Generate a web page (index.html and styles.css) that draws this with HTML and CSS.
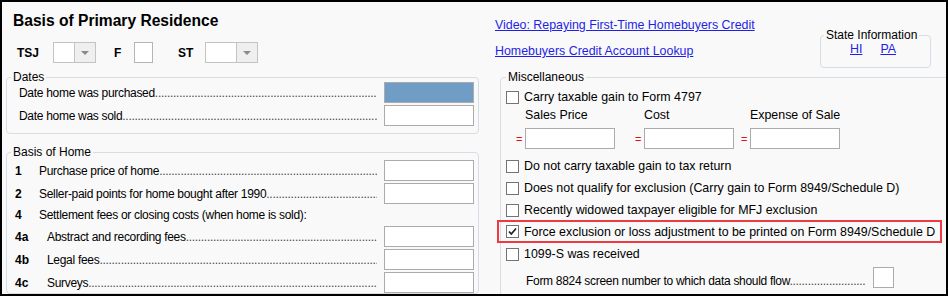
FILE: index.html
```html
<!DOCTYPE html>
<html lang="en">
    <head>
        <meta charset="UTF-8" />
        <meta name="viewport" content="width=device-width, initial-scale=1.0" />
        <title>Basis of Primary Residence</title>
        <link rel="stylesheet" href="styles.css">
    </head>
    <body>
        <div class="frame">
            <div class="left">
                <h1 class="title">Basis of Primary Residence</h1>
                <div class="filing">
                    <span class="tag tag-tsj">TSJ</span>
                    <span class="combo combo-tsj"><span class="combo-val"></span><span class="combo-btn"></span></span>
                    <span class="tag tag-f">F</span>
                    <span class="box box-f"></span>
                    <span class="tag tag-st">ST</span>
                    <span class="combo combo-st"><span class="combo-val"></span><span class="combo-btn"></span></span>
                </div>

                <fieldset class="group group-dates">
                    <legend>Dates</legend>
                    <div class="row">
                        <span class="lead">Date home was purchased</span>
                        <span class="field field-active"></span>
                    </div>
                    <div class="row">
                        <span class="lead">Date home was sold</span>
                        <span class="field"></span>
                    </div>
                </fieldset>

                <fieldset class="group group-basis">
                    <legend>Basis of Home</legend>
                    <div class="row">
                        <span class="num">1</span>
                        <span class="lead">Purchase price of home</span>
                        <span class="field"></span>
                    </div>
                    <div class="row">
                        <span class="num">2</span>
                        <span class="lead">Seller-paid points for home bought after 1990</span>
                        <span class="field"></span>
                    </div>
                    <div class="row row-head">
                        <span class="num">4</span>
                        <span class="plain">Settlement fees or closing costs (when home is sold):</span>
                    </div>
                    <div class="row">
                        <span class="num">4a</span>
                        <span class="lead sub">Abstract and recording fees</span>
                        <span class="field"></span>
                    </div>
                    <div class="row">
                        <span class="num">4b</span>
                        <span class="lead sub">Legal fees</span>
                        <span class="field"></span>
                    </div>
                    <div class="row">
                        <span class="num">4c</span>
                        <span class="lead sub">Surveys</span>
                        <span class="field"></span>
                    </div>
                </fieldset>
            </div>

            <div class="right">
                <div class="top">
                    <div class="links">
                        <a href="#">Video: Repaying First-Time Homebuyers Credit</a>
                        <a href="#">Homebuyers Credit Account Lookup</a>
                    </div>
                    <fieldset class="state">
                        <legend>State Information</legend>
                        <div class="state-links">
                            <a href="#">HI</a>
                            <a href="#">PA</a>
                        </div>
                    </fieldset>
                </div>

                <fieldset class="group misc">
                    <legend>Miscellaneous</legend>
                    <div class="check check-first"><span class="cb"></span>Carry taxable gain to Form 4797</div>
                    <div class="amounts amounts-head">
                        <span>Sales Price</span>
                        <span>Cost</span>
                        <span>Expense of Sale</span>
                    </div>
                    <div class="amounts amounts-fields">
                        <span class="amt"><span class="eq">=</span><span class="field"></span></span>
                        <span class="amt"><span class="eq">=</span><span class="field"></span></span>
                        <span class="amt"><span class="eq">=</span><span class="field"></span></span>
                    </div>
                    <div class="check check-gap"><span class="cb"></span>Do not carry taxable gain to tax return</div>
                    <div class="check"><span class="cb"></span>Does not qualify for exclusion (Carry gain to Form 8949/Schedule D)</div>
                    <div class="check"><span class="cb"></span>Recently widowed taxpayer eligible for MFJ exclusion</div>
                    <div class="check check-marked">
                        <span class="cb">
                            <svg width="11" height="11" viewBox="0 0 11 11"><path d="M2 5.5 L4.3 8 L9 2.5" fill="none" stroke="#1e1e1e" stroke-width="1.7"/></svg>
                        </span>Force exclusion or loss adjustment to be printed on Form 8949/Schedule D
                    </div>
                    <div class="check"><span class="cb"></span>1099-S was received</div>
                    <div class="flow">
                        <span class="lead">Form 8824 screen number to which data should flow</span>
                        <span class="field field-small"></span>
                    </div>
                </fieldset>
            </div>
        </div>
    </body>
</html>
```

FILE: styles.css
```css
* {
    box-sizing: border-box;
}
body {
    margin: 0;
    font-family: "Liberation Sans", Arial, sans-serif;
    font-size: 12px;
    color: #000;
}
.frame {
    width: 948px;
    height: 296px;
    border: 2px solid #000;
    background: #f9f9f9;
    display: flex;
    overflow: hidden;
}
.left {
    width: 486px;
    flex-shrink: 0;
}
.right {
    flex: 1;
    min-width: 0;
    font-size: 12.4px;
}

/* header */
.title {
    margin: 9px 0 0 11px;
    font-size: 15.6px;
    line-height: 20px;
    font-weight: bold;
}
.filing {
    display: flex;
    align-items: center;
    height: 21px;
    margin-top: 11px;
}
.tag {
    font-weight: bold;
}
.tag-tsj {
    margin-left: 15px;
    width: 36px;
}
.tag-f {
    margin-left: 18px;
    width: 20px;
}
.tag-st {
    margin-left: 25px;
    width: 27px;
}
.combo {
    display: flex;
    height: 21px;
    border: 1px solid #c3c3c3;
    background: #fff;
}
.combo-tsj {
    width: 43px;
}
.combo-st {
    width: 53px;
}
.combo-val {
    flex: 1;
}
.combo-btn {
    width: 21px;
    background: #efefef;
    border-left: 1px solid #c3c3c3;
    display: flex;
    align-items: center;
    justify-content: center;
}
.combo-btn::after {
    content: "";
    border-left: 4px solid transparent;
    border-right: 4px solid transparent;
    border-top: 4px solid #8a8a8a;
}
.box {
    height: 21px;
    border: 1px solid #b5b5b5;
    background: #fff;
}
.box-f {
    width: 19px;
}

/* groups */
.group {
    margin: 0;
    padding: 0 4px;
    border: 1px solid #d6dde5;
    border-radius: 4px;
    min-inline-size: 0;
}
.group legend,
.state legend {
    padding: 0 2px;
    line-height: 10px;
    font-size: 12px;
}
.group-dates {
    width: 473px;
    margin: 9px 0 0 4px;
    padding-bottom: 7px;
}
.group-basis {
    width: 473px;
    margin: 13px 0 0 4px;
    padding-top: 3px;
}
.row {
    display: flex;
    align-items: center;
    height: 21px;
    margin-bottom: 2px;
}
.row:last-child {
    margin-bottom: 0;
}
.row-head {
    height: 18px;
}
.group-dates .lead {
    padding-left: 8px;
}
.num {
    width: 24px;
    margin-left: 4px;
    font-weight: bold;
}
.plain {
    letter-spacing: -0.3px;
}
.lead {
    flex: 1;
    min-width: 0;
    overflow: hidden;
    white-space: nowrap;
    margin-right: 7px;
    font-size: 12px;
    letter-spacing: -0.3px;
}
.lead::after {
    content: "........................................................................................................................................................................................";
    color: #444;
}
.lead.sub {
    padding-left: 8px;
}
.field {
    width: 90px;
    height: 21px;
    border: 1px solid #ababab;
    background: #fff;
    flex-shrink: 0;
}
.field-active {
    background: #6f9dc5;
}

/* right side */
.top {
    display: flex;
    justify-content: space-between;
    height: 70px;
}
.links {
    display: flex;
    flex-direction: column;
    gap: 11px;
    margin: 16px 0 0 7px;
}
a {
    color: #1f1fe6;
    line-height: 15px;
}
.state {
    margin: 28px 15px 0 0;
    width: 111px;
    height: 38px;
    padding: 2px 3px 0;
    border: 1px solid #d6dde5;
    border-radius: 4px;
    min-inline-size: 0;
}
.state-links {
    display: flex;
    gap: 18px;
    padding-left: 26px;
}
.state-links a {
    line-height: 14px;
}
.misc {
    margin: 0 -20px 0 12px;
    padding: 0 5px;
    height: 240px;
}
.check {
    display: flex;
    align-items: center;
    height: 22px;
}
.check-first {
    margin-top: 4px;
}
.check-gap {
    margin-top: 6px;
}
.cb {
    width: 13px;
    height: 13px;
    border: 1px solid #737373;
    background: #fff;
    margin-right: 5px;
    display: flex;
    align-items: center;
    justify-content: center;
    flex-shrink: 0;
}
.check-marked {
    width: fit-content;
    height: 23px;
    margin: -1px 0 0 -9px;
    padding: 0 5px 0 7px;
    border: 2px solid #ee3b43;
}
.amounts {
    display: grid;
    grid-template-columns: 119px 106px 100px;
    padding-left: 10px;
}
.amounts-head {
    height: 14px;
    line-height: 14px;
    padding-left: 19px;
}
.amounts-fields {
    margin-top: 6px;
}
.amt {
    display: flex;
    align-items: center;
}
.eq {
    width: 9px;
    color: #e01010;
    font-size: 11px;
}
.flow {
    display: flex;
    align-items: center;
    width: 388px;
    margin-top: 2px;
    padding-left: 20px;
}
.flow .lead {
    padding-top: 6px;
}
.field-small {
    width: 21px;
}
```
